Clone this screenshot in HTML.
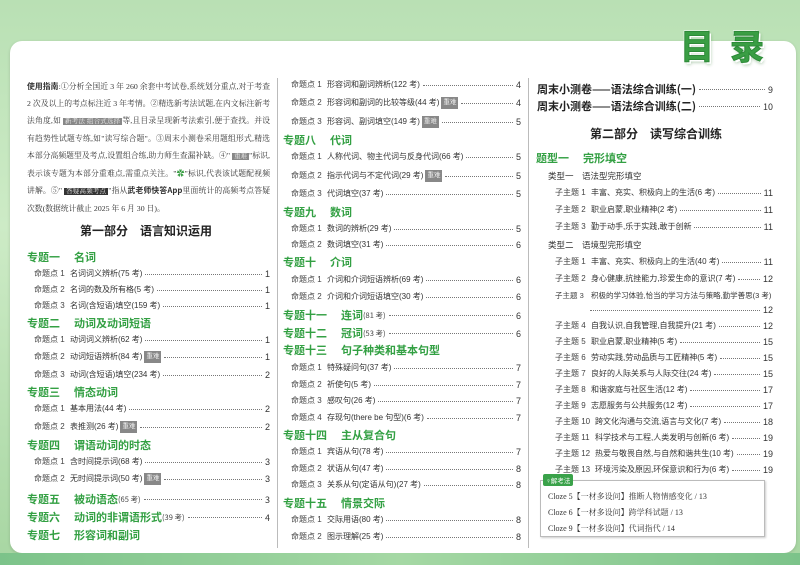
<!DOCTYPE html><html><head><meta charset="utf-8"><style>
*{margin:0;padding:0;box-sizing:border-box}
body{width:800px;height:565px;overflow:hidden;position:relative;background:linear-gradient(180deg,#b9e0b4 0%,#cdebc6 40%,#a7d6a2 100%);font-family:"Liberation Sans","Noto Sans CJK SC",sans-serif;color:#333}
.panel{position:absolute;left:10px;top:41px;width:786px;height:512px;background:#fff;border-radius:12px;box-shadow:0 1px 3px rgba(0,0,0,.15)}
.bot{position:absolute;left:0;top:553px;width:800px;height:12px;background:linear-gradient(90deg,#7cc38a,#a5d8a4,#7cc38a)}
.title{position:absolute;left:680px;top:20px;font-size:34px;font-weight:bold;color:#3a9e44;letter-spacing:16px;font-family:"Noto Sans CJK SC",sans-serif;-webkit-text-stroke:1px #2d8a38;text-shadow:2px 2px 0 #fff,-1px -1px 0 #fff,2px 3px 3px rgba(0,90,0,.3)}
.r{position:absolute;display:flex;align-items:center;font-size:8px;white-space:nowrap;height:12px;line-height:12px;color:#333}
.r .l{width:36px;color:#444}
.f{flex:1;border-bottom:1px dotted #777;margin:0 3px;height:0}
.n{font-size:9px;color:#333}
.h{position:absolute;font-size:11px;font-weight:bold;color:#33a043;white-space:nowrap;font-family:"Noto Sans CJK SC",sans-serif;display:flex;align-items:center;height:14px}
.h b{margin-right:14px;font-weight:bold}
.s{font-size:7.5px;color:#444;font-weight:normal}
.tag{background:#888;color:#eee;font-size:6.5px;padding:0 2px;margin-left:2px}
.intro{position:absolute;left:27px;top:78px;width:243px;font-size:7.8px;line-height:17px;color:#333;font-family:"Liberation Serif","Noto Serif CJK SC",serif;text-align:justify}
.sec{position:absolute;font-size:12px;font-weight:bold;color:#222;white-space:nowrap;font-family:"Noto Sans CJK SC",sans-serif}
.vl{position:absolute;width:1px;background:#bbb}
.box{position:absolute;left:540px;top:480px;width:225px;height:57px;border:1px solid #bbb;box-shadow:1px 1px 2px rgba(0,0,0,.2)}
.cz{position:absolute;left:548px;font-size:8px;color:#333;font-family:"Liberation Serif","Noto Serif CJK SC",serif}
</style></head><body>
<div class="panel"></div><div class="bot"></div>
<div class="title">目录</div>
<div class="vl" style="left:277px;top:78px;height:470px"></div>
<div class="vl" style="left:528px;top:78px;height:470px"></div>

<div class="intro"><b style="font-family:'Noto Sans CJK SC',sans-serif">使用指南</b>:①分析全国近 3 年 260 余套中考试卷,系统划分重点,对于考查 2 次及以上的考点标注近 3 年考情。②精选新考法试题,在内文标注新考法角度,如<span class="tag">新考法 组合式选择</span>等,且目录呈现新考法索引,便于查找。并设有趋势性试题专练,如"读写综合题"。③周末小测卷采用题组形式,精选本部分高频题型及考点,设置组合练,助力师生查漏补缺。④"<span class="tag">重难</span>"标识,表示该专题为本部分重难点,需重点关注。"<span style="color:#3a9e44">✿</span>"标识,代表该试题配视频讲解。⑤"<span class="tag" style="background:#333">答疑高频考点</span>"指从<b style="font-family:'Noto Sans CJK SC',sans-serif">武老师快答App</b>里面统计的高频考点答疑次数(数据统计截止 2025 年 6 月 30 日)。</div>

<div class="sec" style="left:80px;top:222px">第一部分　语言知识运用</div>

<div class="h" style="left:27px;top:250px"><b>专题一</b>名词</div>
<div class="r" style="left:34px;top:268px;width:236px"><span class="l">命题点 1</span>名词词义辨析(75 考)<span class="f"></span><span class="n">1</span></div>
<div class="r" style="left:34px;top:284px;width:236px"><span class="l">命题点 2</span>名词的数及所有格(5 考)<span class="f"></span><span class="n">1</span></div>
<div class="r" style="left:34px;top:300px;width:236px"><span class="l">命题点 3</span>名词(含短语)填空(159 考)<span class="f"></span><span class="n">1</span></div>
<div class="h" style="left:27px;top:316px"><b>专题二</b>动词及动词短语</div>
<div class="r" style="left:34px;top:334px;width:236px"><span class="l">命题点 1</span>动词词义辨析(62 考)<span class="f"></span><span class="n">1</span></div>
<div class="r" style="left:34px;top:351px;width:236px"><span class="l">命题点 2</span>动词短语辨析(84 考)<span class="tag">重难</span><span class="f"></span><span class="n">1</span></div>
<div class="r" style="left:34px;top:369px;width:236px"><span class="l">命题点 3</span>动词(含短语)填空(234 考)<span class="f"></span><span class="n">2</span></div>
<div class="h" style="left:27px;top:385px"><b>专题三</b>情态动词</div>
<div class="r" style="left:34px;top:403px;width:236px"><span class="l">命题点 1</span>基本用法(44 考)<span class="f"></span><span class="n">2</span></div>
<div class="r" style="left:34px;top:421px;width:236px"><span class="l">命题点 2</span>表推测(26 考)<span class="tag">重难</span><span class="f"></span><span class="n">2</span></div>
<div class="h" style="left:27px;top:438px"><b>专题四</b>谓语动词的时态</div>
<div class="r" style="left:34px;top:456px;width:236px"><span class="l">命题点 1</span>含时间提示词(68 考)<span class="f"></span><span class="n">3</span></div>
<div class="r" style="left:34px;top:473px;width:236px"><span class="l">命题点 2</span>无时间提示词(50 考)<span class="tag">重难</span><span class="f"></span><span class="n">3</span></div>
<div class="h" style="left:27px;top:492px;width:243px"><b>专题五</b>被动语态<span class="s">(65 考)</span><span class="f"></span><span class="n" style="font-weight:normal">3</span></div>
<div class="h" style="left:27px;top:510px;width:243px"><b>专题六</b>动词的非谓语形式<span class="s">(39 考)</span><span class="f"></span><span class="n" style="font-weight:normal">4</span></div>
<div class="h" style="left:27px;top:528px"><b>专题七</b>形容词和副词</div>

<div class="r" style="left:291px;top:79px;width:230px"><span class="l">命题点 1</span>形容词和副词辨析(122 考)<span class="f"></span><span class="n">4</span></div>
<div class="r" style="left:291px;top:97px;width:230px"><span class="l">命题点 2</span>形容词和副词的比较等级(44 考)<span class="tag">重难</span><span class="f"></span><span class="n">4</span></div>
<div class="r" style="left:291px;top:116px;width:230px"><span class="l">命题点 3</span>形容词、副词填空(149 考)<span class="tag">重难</span><span class="f"></span><span class="n">5</span></div>
<div class="h" style="left:283px;top:133px"><b>专题八</b>代词</div>
<div class="r" style="left:291px;top:151px;width:230px"><span class="l">命题点 1</span>人称代词、物主代词与反身代词(66 考)<span class="f"></span><span class="n">5</span></div>
<div class="r" style="left:291px;top:170px;width:230px"><span class="l">命题点 2</span>指示代词与不定代词(29 考)<span class="tag">重难</span><span class="f"></span><span class="n">5</span></div>
<div class="r" style="left:291px;top:188px;width:230px"><span class="l">命题点 3</span>代词填空(37 考)<span class="f"></span><span class="n">5</span></div>
<div class="h" style="left:283px;top:205px"><b>专题九</b>数词</div>
<div class="r" style="left:291px;top:223px;width:230px"><span class="l">命题点 1</span>数词的辨析(29 考)<span class="f"></span><span class="n">5</span></div>
<div class="r" style="left:291px;top:239px;width:230px"><span class="l">命题点 2</span>数词填空(31 考)<span class="f"></span><span class="n">6</span></div>
<div class="h" style="left:283px;top:255px"><b>专题十</b>介词</div>
<div class="r" style="left:291px;top:274px;width:230px"><span class="l">命题点 1</span>介词和介词短语辨析(69 考)<span class="f"></span><span class="n">6</span></div>
<div class="r" style="left:291px;top:291px;width:230px"><span class="l">命题点 2</span>介词和介词短语填空(30 考)<span class="f"></span><span class="n">6</span></div>
<div class="h" style="left:283px;top:308px;width:238px"><b>专题十一</b>连词<span class="s">(81 考)</span><span class="f"></span><span class="n" style="font-weight:normal">6</span></div>
<div class="h" style="left:283px;top:326px;width:238px"><b>专题十二</b>冠词<span class="s">(53 考)</span><span class="f"></span><span class="n" style="font-weight:normal">6</span></div>
<div class="h" style="left:283px;top:343px"><b>专题十三</b>句子种类和基本句型</div>
<div class="r" style="left:291px;top:362px;width:230px"><span class="l">命题点 1</span>特殊疑问句(37 考)<span class="f"></span><span class="n">7</span></div>
<div class="r" style="left:291px;top:379px;width:230px"><span class="l">命题点 2</span>祈使句(5 考)<span class="f"></span><span class="n">7</span></div>
<div class="r" style="left:291px;top:395px;width:230px"><span class="l">命题点 3</span>感叹句(26 考)<span class="f"></span><span class="n">7</span></div>
<div class="r" style="left:291px;top:412px;width:230px"><span class="l">命题点 4</span>存现句(there be 句型)(6 考)<span class="f"></span><span class="n">7</span></div>
<div class="h" style="left:283px;top:428px"><b>专题十四</b>主从复合句</div>
<div class="r" style="left:291px;top:446px;width:230px"><span class="l">命题点 1</span>宾语从句(78 考)<span class="f"></span><span class="n">7</span></div>
<div class="r" style="left:291px;top:463px;width:230px"><span class="l">命题点 2</span>状语从句(47 考)<span class="f"></span><span class="n">8</span></div>
<div class="r" style="left:291px;top:479px;width:230px"><span class="l">命题点 3</span>关系从句(定语从句)(27 考)<span class="f"></span><span class="n">8</span></div>
<div class="h" style="left:283px;top:496px"><b>专题十五</b>情景交际</div>
<div class="r" style="left:291px;top:514px;width:230px"><span class="l">命题点 1</span>交际用语(80 考)<span class="f"></span><span class="n">8</span></div>
<div class="r" style="left:291px;top:531px;width:230px"><span class="l">命题点 2</span>图示理解(25 考)<span class="f"></span><span class="n">8</span></div>

<div class="h" style="left:537px;top:82px;width:236px;color:#222"><span>周末小测卷——语法综合训练(一)</span><span class="f"></span><span class="n" style="font-weight:normal">9</span></div>
<div class="h" style="left:537px;top:99px;width:236px;color:#222"><span>周末小测卷——语法综合训练(二)</span><span class="f"></span><span class="n" style="font-weight:normal">10</span></div>
<div class="sec" style="left:590px;top:125px">第二部分　读写综合训练</div>
<div class="h" style="left:536px;top:151px"><b>题型一</b>完形填空</div>
<div class="r" style="left:548px;top:170px;font-size:8.5px"><span style="width:34px">类型一</span>语法型完形填空</div>
<div class="r" style="left:555px;top:187px;width:218px"><span class="l">子主题 1</span>丰富、充实、积极向上的生活(6 考)<span class="f"></span><span class="n">11</span></div>
<div class="r" style="left:555px;top:204px;width:218px"><span class="l">子主题 2</span>职业启蒙,职业精神(2 考)<span class="f"></span><span class="n">11</span></div>
<div class="r" style="left:555px;top:221px;width:218px"><span class="l">子主题 3</span>勤于动手,乐于实践,敢于创新<span class="f"></span><span class="n">11</span></div>
<div class="r" style="left:548px;top:239px;font-size:8.5px"><span style="width:34px">类型二</span>语境型完形填空</div>
<div class="r" style="left:555px;top:256px;width:218px"><span class="l">子主题 1</span>丰富、充实、积极向上的生活(40 考)<span class="f"></span><span class="n">11</span></div>
<div class="r" style="left:555px;top:273px;width:218px"><span class="l">子主题 2</span>身心健康,抗挫能力,珍爱生命的意识(7 考)<span class="f"></span><span class="n">12</span></div>
<div class="r" style="left:555px;top:290px;font-size:7.5px"><span class="l">子主题 3</span>积极的学习体验,恰当的学习方法与策略,勤学善思(3 考)</div>
<div class="r" style="left:587px;top:304px;width:186px"><span class="f"></span><span class="n">12</span></div>
<div class="r" style="left:555px;top:320px;width:218px"><span class="l">子主题 4</span>自我认识,自我管理,自我提升(21 考)<span class="f"></span><span class="n">12</span></div>
<div class="r" style="left:555px;top:336px;width:218px"><span class="l">子主题 5</span>职业启蒙,职业精神(5 考)<span class="f"></span><span class="n">15</span></div>
<div class="r" style="left:555px;top:352px;width:218px"><span class="l">子主题 6</span>劳动实践,劳动品质与工匠精神(5 考)<span class="f"></span><span class="n">15</span></div>
<div class="r" style="left:555px;top:368px;width:218px"><span class="l">子主题 7</span>良好的人际关系与人际交往(24 考)<span class="f"></span><span class="n">15</span></div>
<div class="r" style="left:555px;top:384px;width:218px"><span class="l">子主题 8</span>和谐家庭与社区生活(12 考)<span class="f"></span><span class="n">17</span></div>
<div class="r" style="left:555px;top:400px;width:218px"><span class="l">子主题 9</span>志愿服务与公共服务(12 考)<span class="f"></span><span class="n">17</span></div>
<div class="r" style="left:555px;top:416px;width:218px"><span class="l" style="width:40px">子主题 10</span>跨文化沟通与交流,语言与文化(7 考)<span class="f"></span><span class="n">18</span></div>
<div class="r" style="left:555px;top:432px;width:218px"><span class="l" style="width:40px">子主题 11</span>科学技术与工程,人类发明与创新(6 考)<span class="f"></span><span class="n">19</span></div>
<div class="r" style="left:555px;top:448px;width:218px"><span class="l" style="width:40px">子主题 12</span>热爱与敬畏自然,与自然和谐共生(10 考)<span class="f"></span><span class="n">19</span></div>
<div class="r" style="left:555px;top:464px;width:218px"><span class="l" style="width:40px">子主题 13</span>环境污染及原因,环保意识和行为(6 考)<span class="f"></span><span class="n">19</span></div>
<div class="box"></div>
<div style="position:absolute;left:543px;top:474px;background:#3aa24a;color:#fff;font-size:6.5px;padding:1px 3px;border-radius:2px">♀解考法</div>
<div class="cz" style="top:491px">Cloze 5【一材多设问】推断人物情感变化 / 13</div>
<div class="cz" style="top:507px">Cloze 6【一材多设问】跨学科试题 / 13</div>
<div class="cz" style="top:523px">Cloze 9【一材多设问】代词指代 / 14</div>
</body></html>
